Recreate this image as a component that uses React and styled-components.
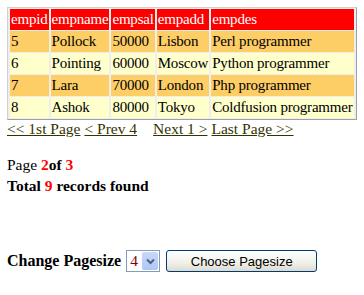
import React from "react";
import styled, { createGlobalStyle } from "styled-components";

const rows = [
  { id: 5, name: "Pollock", sal: 50000, add: "Lisbon", des: "Perl programmer" },
  { id: 6, name: "Pointing", sal: 60000, add: "Moscow", des: "Python programmer" },
  { id: 7, name: "Lara", sal: 70000, add: "London", des: "Php programmer" },
  { id: 8, name: "Ashok", sal: 80000, add: "Tokyo", des: "Coldfusion programmer" },
];

const GlobalStyle = createGlobalStyle`
  body {
    margin: 7px;
    background: #fff;
    font-family: "Liberation Serif", "Times New Roman", serif;
    font-size: 15.5px;
    color: #000;
  }
`;

const Table = styled.table`
  border-collapse: separate;
  border-spacing: 2px 1px;
  border: 1px solid;
  border-color: #d4d0c8 #a0a0a0 #a0a0a0 #d4d0c8;
  background: #eeeeee;
  font-size: 15px;
  letter-spacing: -0.2px;
  line-height: 19px;
`;

const Th = styled.th`
  background: #ff0000;
  color: #fff;
  font-weight: normal;
  text-align: left;
  padding: 1px;
`;

const Td = styled.td`
  background: ${(p) => (p.$odd ? "#fdcd66" : "#ffffcc")};
  padding: 1px;
  white-space: nowrap;
`;

const Pager = styled.div`
  margin-top: -1px;
  line-height: 19px;
`;

const PageLink = styled.a`
  color: #333300;
  text-decoration: underline;
  margin-right: ${(p) => p.$gap || 4}px;
`;

const Info = styled.div`
  margin-top: 16px;
  line-height: 21px;
`;

const Red = styled.span`
  color: #ff0000;
  font-weight: bold;
`;

const Bold = styled.div`
  font-weight: bold;
`;

const SizeForm = styled.div`
  margin-top: 54px;
  display: flex;
  align-items: center;
  gap: 5px;
`;

const Label = styled.span`
  font-weight: bold;
  font-size: 16px;
`;

const SelectBox = styled.div`
  display: flex;
  align-items: stretch;
  height: 20px;
  width: 32px;
  border: 1px solid #7f9db9;
  background: #fff;
`;

const SelectValue = styled.span`
  flex: 1;
  color: #800000;
  padding-left: 3px;
  line-height: 20px;
`;

const Arrow = styled.span`
  width: 16px;
  margin: 1px;
  background: linear-gradient(#c8d8fb, #b0c6f5);
  border-radius: 2px;
  display: flex;
  align-items: center;
  justify-content: center;
`;

const Button = styled.button`
  width: 151px;
  height: 22px;
  margin-left: 1px;
  border: 1px solid #003c74;
  border-radius: 3px;
  background: linear-gradient(#ffffff, #f0f0ea 60%, #dcdad0);
  font-family: "Liberation Sans", Arial, sans-serif;
  font-size: 13px;
  color: #000;
  padding: 0;
`;

export default function App() {
  return (
    <>
      <GlobalStyle />
      <Table>
        <thead>
          <tr>
            <Th>empid</Th>
            <Th>empname</Th>
            <Th>empsal</Th>
            <Th>empadd</Th>
            <Th>empdes</Th>
          </tr>
        </thead>
        <tbody>
          {rows.map((r, i) => (
            <tr key={r.id}>
              <Td $odd={i % 2 === 0}>{r.id}</Td>
              <Td $odd={i % 2 === 0}>{r.name}</Td>
              <Td $odd={i % 2 === 0}>{r.sal}</Td>
              <Td $odd={i % 2 === 0}>{r.add}</Td>
              <Td $odd={i % 2 === 0}>{r.des}</Td>
            </tr>
          ))}
        </tbody>
      </Table>
      <Pager>
        <PageLink href="#">&lt;&lt; 1st Page</PageLink>
        <PageLink href="#" $gap={16}>&lt; Prev 4</PageLink>
        <PageLink href="#">Next 1 &gt;</PageLink>
        <PageLink href="#">Last Page &gt;&gt;</PageLink>
      </Pager>
      <Info>
        Page <Red>2</Red>
        <b>of</b> <Red>3</Red>
        <Bold>
          Total <Red>9</Red> records found
        </Bold>
      </Info>
      <SizeForm>
        <Label>Change Pagesize</Label>
        <SelectBox>
          <SelectValue>4</SelectValue>
          <Arrow>
            <svg width="9" height="7" viewBox="0 0 9 7">
              <path d="M1 1.5 L4.5 5 L8 1.5" fill="none" stroke="#4d6185" strokeWidth="2" />
            </svg>
          </Arrow>
        </SelectBox>
        <Button>Choose Pagesize</Button>
      </SizeForm>
    </>
  );
}
